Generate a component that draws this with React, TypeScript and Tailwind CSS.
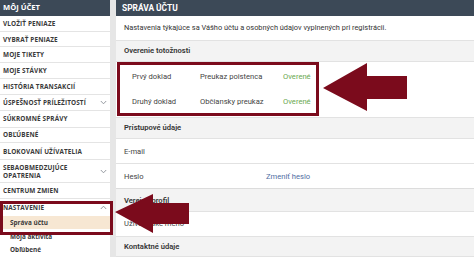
import React from "react";

const Chevron = ({ up = false }: { up?: boolean }) => (
  <svg width="7" height="5" viewBox="0 0 7 5" className="shrink-0">
    <polyline
      points={up ? "0.8,4 3.5,1.2 6.2,4" : "0.8,1 3.5,3.8 6.2,1"}
      fill="none"
      stroke="#8a8f96"
      strokeWidth="0.9"
    />
  </svg>
);

const SideRow = ({
  label,
  h = "h-[16px]",
  chevron,
}: {
  label: React.ReactNode;
  h?: string;
  chevron?: "up" | "down";
}) => (
  <div className={`${h} flex items-center justify-between border-b border-[#e4e4e4] pl-[3px] pr-[3px] pt-[1px]`}>
    <span className="font-bold text-[6.4px] leading-[8px] text-[#3a3a3a] uppercase tracking-[0.02em]">{label}</span>
    {chevron && <Chevron up={chevron === "up"} />}
  </div>
);

const Section = ({ title, h }: { title: string; h: string }) => (
  <div className={`${h} flex items-center bg-[#f3f3f3] border-b border-[#e2e2e2] pl-[8px] text-[7.6px] font-semibold text-[#333]`}>
    {title}
  </div>
);

export default function App() {
  return (
    <div
      className="relative w-[474px] h-[257px] overflow-hidden bg-white flex"
      style={{ fontFamily: "Roboto, 'Open Sans', Arial, sans-serif" }}
    >
      {/* Sidebar */}
      <div className="w-[110px] shrink-0 flex flex-col bg-white" style={{ fontFamily: "'Open Sans', Roboto, sans-serif" }}>
        <div className="h-[16px] bg-[#3c4957] flex items-center pl-[3px] text-white font-bold text-[7.6px]">MÔJ ÚČET</div>
        <SideRow label="VLOŽIŤ PENIAZE" />
        <SideRow label="VYBRAŤ PENIAZE" />
        <SideRow label="MOJE TIKETY" />
        <SideRow label="MOJE STÁVKY" />
        <SideRow label="HISTÓRIA TRANSAKCIÍ" />
        <SideRow label="ÚSPEŠNOSŤ PRÍLEŽITOSTÍ" chevron="down" />
        <SideRow label="SÚKROMNÉ SPRÁVY" h="h-[17px]" />
        <SideRow label="OBĽÚBENÉ" />
        <SideRow label="BLOKOVANÍ UŽÍVATELIA" h="h-[17px]" />
        <SideRow
          label={
            <>
              SEBAOBMEDZUJÚCE
              <br />
              OPATRENIA
            </>
          }
          h="h-[23px]"
          chevron="down"
        />
        <SideRow label="CENTRUM ZMIEN" />
        <div className="h-[17px] flex items-center justify-between pl-[3px] pr-[3px] pt-[1px]">
          <span className="font-bold text-[6.4px] text-[#3a3a3a] uppercase tracking-[0.02em]">NASTAVENIE</span>
          <Chevron up />
        </div>
        <div className="h-[14px] flex items-center bg-[#f7e7d3] pl-[10px] text-[6.4px] font-bold text-[#3a3a3a]">Správa účtu</div>
        <div className="h-[14px] flex items-center pl-[10px] text-[6.4px] font-bold text-[#3a3a3a]">Moja aktivita</div>
        <div className="h-[14px] flex items-center pl-[10px] text-[6.4px] font-bold text-[#3a3a3a]">Obľúbené</div>
      </div>

      {/* gutter */}
      <div className="w-[6px] shrink-0 bg-[#e6e6e6]" />

      {/* Main */}
      <div className="flex-1 flex flex-col">
        <div className="h-[16px] bg-[#3c4957] flex items-center pl-[6px] text-white font-bold text-[8.4px]">SPRÁVA ÚČTU</div>
        <div className="h-[25px] flex items-center border-b border-[#e2e2e2] pl-[8px] text-[7.4px] text-[#333]">
          Nastavenia týkajúce sa Vášho účtu a osobných údajov vyplnených pri registrácii.
        </div>
        <Section title="Overenie totožnosti" h="h-[21px]" />
        <div className="h-[56px] flex flex-col justify-center gap-[13px] border-b border-[#e2e2e2] text-[7.6px] text-[#444]">
          <div className="flex items-center">
            <span className="w-[84px] pl-[16px]">Prvý doklad</span>
            <span className="w-[83px]">Preukaz poistenca</span>
            <span className="text-[#6aa84f]">Overené</span>
          </div>
          <div className="flex items-center">
            <span className="w-[84px] pl-[16px]">Druhý doklad</span>
            <span className="w-[83px]">Občiansky preukaz</span>
            <span className="text-[#6aa84f]">Overené</span>
          </div>
        </div>
        <Section title="Prístupové údaje" h="h-[22px]" />
        <div className="h-[25px] flex items-center border-b border-[#e2e2e2] pl-[8px] text-[7.6px] text-[#444]">E-mail</div>
        <div className="h-[25px] flex items-center border-b border-[#dcdcdc] pl-[8px] text-[7.6px] text-[#444]">
          <span className="w-[142px]">Heslo</span>
          <span className="text-[#4f6ea3]">Zmeniť heslo</span>
        </div>
        <Section title="Verejný profil" h="h-[23px]" />
        <div className="h-[25px] flex items-center border-b border-[#e2e2e2] pl-[8px] text-[7.6px] text-[#444]">Užívateľské meno</div>
        <Section title="Kontaktné údaje" h="h-[20px]" />
      </div>

      {/* Annotation overlays */}
      <div className="absolute left-[117px] top-[62px] w-[202px] h-[54px] border-[3px] border-[#7b0b1c]" />
      <div className="absolute left-0 top-[201px] w-[113px] h-[34px] border-[3px] border-[#7b0b1c]" />
      <svg className="absolute left-0 top-0 pointer-events-none" width="474" height="257">
        <polygon points="323,88 367,63 367,76 407,76 407,99 367,99 367,111" fill="#7b0b1c" />
        <polygon points="115,212 153,194 153,203 189,203 189,224 153,224 153,233" fill="#7b0b1c" />
      </svg>
    </div>
  );
}
